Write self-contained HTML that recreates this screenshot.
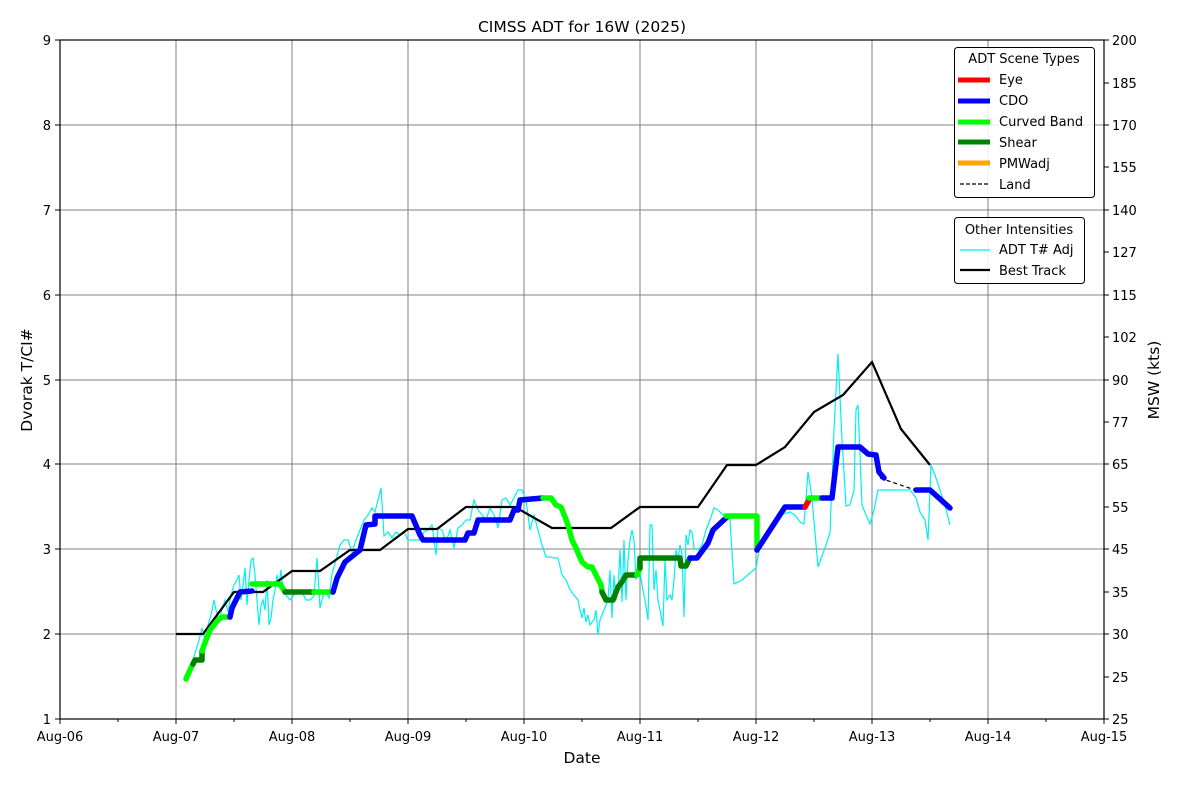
<!DOCTYPE html>
<html><head><meta charset="utf-8"><style>
html,body{margin:0;padding:0;background:#fff;}
svg{display:block;font-family:"DejaVu Sans","Liberation Sans",sans-serif;}
</style></head><body>
<svg width="1200" height="800" viewBox="0 0 1200 800" xmlns="http://www.w3.org/2000/svg">
<rect width="1200" height="800" fill="#fff"/>
<g stroke="#808080" stroke-width="1">
<line x1="176" y1="40" x2="176" y2="719"/><line x1="292" y1="40" x2="292" y2="719"/><line x1="408" y1="40" x2="408" y2="719"/><line x1="524" y1="40" x2="524" y2="719"/><line x1="640" y1="40" x2="640" y2="719"/><line x1="756" y1="40" x2="756" y2="719"/><line x1="872" y1="40" x2="872" y2="719"/><line x1="988" y1="40" x2="988" y2="719"/>
<line x1="60" y1="634" x2="1104" y2="634"/><line x1="60" y1="549" x2="1104" y2="549"/><line x1="60" y1="464" x2="1104" y2="464"/><line x1="60" y1="380" x2="1104" y2="380"/><line x1="60" y1="295" x2="1104" y2="295"/><line x1="60" y1="210" x2="1104" y2="210"/><line x1="60" y1="125" x2="1104" y2="125"/>
</g>
<polyline fill="none" stroke="#00f0f0" stroke-width="1.2" points="186,679 190,668 193,660 196,650 199,640 202,628 205,640 208,625 211,615 214,600 216,610 219,620 222,610 225,600 228,612 231,595 234,585 237,580 239,575 241,600 243,585 245,568 247,605 249,580 251,560 253,558 255,575 257,600 259,625 261,605 263,600 265,610 267,580 269,625 271,618 273,600 275,590 277,575 279,585 281,570 283,590 286,595 290,600 294,595 298,592 302,592 306,600 310,600 314,596 317,558 320,608 323,596 326,592 329,598 332,574 336,560 340,545 344,540 348,540 352,552 356,540 360,530 364,520 368,515 372,508 375,512 378,500 381,488 384,536 388,532 392,538 396,532 400,535 404,532 408,540 412,540 416,540 420,540 424,532 428,530 432,525 436,555 438,528 442,530 446,542 450,530 454,548 458,528 462,525 466,520 470,520 474,500 478,510 482,515 486,520 490,508 494,515 498,528 502,500 506,498 510,505 514,498 518,490 522,490 526,500 530,530 534,515 538,530 542,545 546,557 550,557 554,558 558,558 562,575 566,580 570,590 574,595 578,600 580,610 582,618 584,608 586,622 588,615 590,625 592,622 594,620 596,610 598,635 600,620 604,610 608,600 610,570 612,618 614,575 616,600 618,590 620,550 622,602 624,540 626,600 628,560 630,540 632,530 634,540 636,580 638,558 642,585 645,600 648,620 650,525 652,525 654,590 656,570 658,600 660,610 663,626 665,560 667,600 670,595 672,600 674,580 676,550 678,560 680,545 682,554 684,617 686,535 688,545 690,530 692,532 694,548 698,550 702,545 706,530 710,520 714,508 718,510 722,514 726,515 730,520 734,584 742,580 750,573 756,568 760,545 770,530 780,515 790,512 795,515 800,522 804,524 808,472 812,498 818,567 826,545 830,533 834,430 838,354 842,440 846,506 850,505 854,490 856,410 858,405 862,505 866,515 870,524 874,510 878,490 884,490 890,490 900,490 910,490 916,498 920,512 925,520 928,540 931,465 935,475 940,490 945,505 950,525"/>
<polyline fill="none" stroke="#000" stroke-width="2.2" points="176,634 203,634 234,592 263,592 292,571 320,571 350,550 380,550 408,529 437,529 466,507 515,507 552,528 611,528 640,507 698,507 727,465 756,465 785,447 814,412 843,395 872,362 901,429 930,465"/>
<polyline fill="none" stroke="#000" stroke-width="1.2" stroke-dasharray="4,3" points="880,478 915,490"/>
<g fill="none" stroke-width="5.5" stroke-linejoin="round" stroke-linecap="round">
<polyline stroke="#00ff00" points="186,679 190,670 193,664"/>
<polyline stroke="#008000" points="193,664 195,660 202,660 202,651"/>
<polyline stroke="#00ff00" points="202,651 206,640 210,630 214,625 218,620 222,617 230,617"/>
<polyline stroke="#0000ff" points="230,617 232,608 236,600 240,592 252,591"/>
<polyline stroke="#00ff00" points="252,584 280,584 285,592"/>
<polyline stroke="#008000" points="285,592 314,592"/>
<polyline stroke="#00ff00" points="314,592 333,592"/>
<polyline stroke="#0000ff" points="333,592 337,578 345,562 360,550 366,525 375,524 375,516 412,516 420,535 423,540 465,540 468,533 474,533 478,520 510,520 514,510 518,510 520,500 543,498"/>
<polyline stroke="#00ff00" points="543,498 551,498 556,505 561,507 565,517 568,525 572,540 576,548 582,562 588,567 592,567 597,577 601,585 602,592"/>
<polyline stroke="#008000" points="602,592 606,600 613,600 618,587 622,582 626,575 637,575"/>
<polyline stroke="#00ff00" points="637,575 640,568"/>
<polyline stroke="#008000" points="640,568 640,558 680,558 681,566 686,566 690,558"/>
<polyline stroke="#0000ff" points="690,558 697,558 708,543 713,530 727,517"/>
<polyline stroke="#00ff00" points="726,516 757,516 757,550"/>
<polyline stroke="#0000ff" points="757,550 785,507 805,507"/>
<polyline stroke="#ff0000" points="805,507 809,500"/>
<polyline stroke="#00ff00" points="809,498 822,498"/>
<polyline stroke="#0000ff" points="822,498 832,498 838,447 860,447 868,454 876,455 879,472 884,478"/>
<polyline stroke="#0000ff" points="916,490 930,490 950,508"/>
</g>
<rect x="60" y="40" width="1044" height="679" fill="none" stroke="#000" stroke-width="1.2"/>
<g stroke="#000" stroke-width="1">
<path d="M60 719v5M176 719v5M292 719v5M408 719v5M524 719v5M640 719v5M756 719v5M872 719v5M988 719v5M1104 719v5"/>
<path d="M118 719v3M234 719v3M350 719v3M466 719v3M582 719v3M698 719v3M814 719v3M930 719v3M1046 719v3"/>
<path d="M55 719h5M55 634h5M55 549h5M55 464h5M55 380h5M55 295h5M55 210h5M55 125h5M55 40h5"/>
<path d="M1104 40h5M1104 83h5M1104 125h5M1104 167h5M1104 210h5M1104 252h5M1104 295h5M1104 337h5M1104 380h5M1104 422h5M1104 464h5M1104 507h5M1104 549h5M1104 592h5M1104 634h5M1104 677h5M1104 719h5"/>
</g>
<g font-size="13" fill="#000">
<g text-anchor="middle">
<text x="60" y="741">Aug-06</text><text x="176" y="741">Aug-07</text><text x="292" y="741">Aug-08</text><text x="408" y="741">Aug-09</text><text x="524" y="741">Aug-10</text><text x="640" y="741">Aug-11</text><text x="756" y="741">Aug-12</text><text x="872" y="741">Aug-13</text><text x="988" y="741">Aug-14</text><text x="1104" y="741">Aug-15</text>
</g>
<g text-anchor="end">
<text x="51" y="724">1</text><text x="51" y="639">2</text><text x="51" y="554">3</text><text x="51" y="469">4</text><text x="51" y="385">5</text><text x="51" y="300">6</text><text x="51" y="215">7</text><text x="51" y="130">8</text><text x="51" y="45">9</text>
</g>
<g>
<text x="1112" y="45">200</text><text x="1112" y="88">185</text><text x="1112" y="130">170</text><text x="1112" y="172">155</text><text x="1112" y="215">140</text><text x="1112" y="257">127</text><text x="1112" y="300">115</text><text x="1112" y="342">102</text><text x="1112" y="385">90</text><text x="1112" y="427">77</text><text x="1112" y="469">65</text><text x="1112" y="512">55</text><text x="1112" y="554">45</text><text x="1112" y="597">35</text><text x="1112" y="639">30</text><text x="1112" y="682">25</text><text x="1112" y="724">25</text>
</g>
</g>
<text x="582" y="32" font-size="15.5" text-anchor="middle">CIMSS ADT for 16W (2025)</text>
<text x="582" y="763" font-size="15.5" text-anchor="middle">Date</text>
<text transform="translate(32,380) rotate(-90)" font-size="15.5" text-anchor="middle">Dvorak T/CI#</text>
<text transform="translate(1159,380) rotate(-90)" font-size="15.5" text-anchor="middle">MSW (kts)</text>
<rect x="954.5" y="47.5" width="140" height="150" rx="3" fill="#fff" fill-opacity="0.85" stroke="#000"/>
<g font-size="13">
<text x="1024" y="63" text-anchor="middle">ADT Scene Types</text>
<line x1="958" y1="80" x2="990" y2="80" stroke="#ff0000" stroke-width="5"/><text x="999" y="84">Eye</text>
<line x1="958" y1="101" x2="990" y2="101" stroke="#0000ff" stroke-width="5"/><text x="999" y="105">CDO</text>
<line x1="958" y1="122" x2="990" y2="122" stroke="#00ff00" stroke-width="5"/><text x="999" y="126">Curved Band</text>
<line x1="958" y1="142" x2="990" y2="142" stroke="#008000" stroke-width="5"/><text x="999" y="147">Shear</text>
<line x1="958" y1="163" x2="990" y2="163" stroke="#ffa500" stroke-width="5"/><text x="999" y="168">PMWadj</text>
<line x1="960" y1="184" x2="990" y2="184" stroke="#000" stroke-width="1.2" stroke-dasharray="4,2"/><text x="999" y="189">Land</text>
</g>
<rect x="954.5" y="217.5" width="130" height="66" rx="3" fill="#fff" fill-opacity="0.85" stroke="#000"/>
<g font-size="13">
<text x="1019" y="234" text-anchor="middle">Other Intensities</text>
<line x1="960" y1="250" x2="990" y2="250" stroke="#00f0f0" stroke-width="1.2"/><text x="999" y="254">ADT T# Adj</text>
<line x1="960" y1="270" x2="990" y2="270" stroke="#000" stroke-width="2.2"/><text x="999" y="275">Best Track</text>
</g>
</svg>
</body></html>
